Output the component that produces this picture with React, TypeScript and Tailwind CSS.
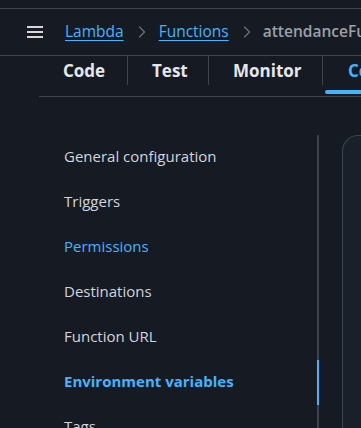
import { ChevronRight } from "lucide-react";

const navItems = [
  { label: "General configuration" },
  { label: "Triggers" },
  { label: "Permissions", link: true },
  { label: "Destinations" },
  { label: "Function URL" },
  { label: "Environment variables", active: true },
  { label: "Tags" },
];

const tabs = [
  { label: "Code", w: "w-[89px]" },
  { label: "Test", w: "w-[81px]" },
  { label: "Monitor", w: "w-[114px]" },
];

export default function App() {
  return (
    <div
      className="w-[361px] h-[428px] overflow-hidden bg-[#161b23] text-[#d1d5db]"
      style={{ fontFamily: '"Open Sans", "Noto Sans", sans-serif' }}
    >
      <div className="h-[9px] border-b border-[#3f444c]" />

      {/* breadcrumb bar */}
      <div className="h-[47px] flex items-center border-b border-[#3f444c] whitespace-nowrap overflow-hidden">
        <div className="shrink-0 ml-[27px] w-[16px] flex flex-col gap-[3px]">
          <span className="h-[2px] bg-[#d6d6d6]" />
          <span className="h-[2px] bg-[#d6d6d6]" />
          <span className="h-[2px] bg-[#d6d6d6]" />
        </div>
        <a className="shrink-0 ml-[22px] text-[15.5px] text-[#42b4ff] underline underline-offset-[3px] decoration-[1px]">
          Lambda
        </a>
        <ChevronRight className="shrink-0 ml-[8px] text-[#6b7079]" size={20} strokeWidth={1.5} />
        <a className="shrink-0 ml-[7px] text-[15.5px] text-[#42b4ff] underline underline-offset-[3px] decoration-[1px]">
          Functions
        </a>
        <ChevronRight className="shrink-0 ml-[8px] text-[#6b7079]" size={20} strokeWidth={1.5} />
        <span className="shrink-0 ml-[6px] text-[15.5px] font-semibold text-[#9ba0a8]">attendanceFunction</span>
      </div>

      {/* tabs */}
      <div className="ml-[39px] h-[41px] border-b border-[#3f444c] flex whitespace-nowrap">
        {tabs.map((t) => (
          <div key={t.label} className={"shrink-0 flex items-start justify-between " + t.w}>
            <div className="pl-[24px] pt-[2px] text-[17px] font-bold text-[#e5e7eb]">{t.label}</div>
            <div className="w-px h-[29px] bg-[#3f444c]" />
          </div>
        ))}
        <div className="relative shrink-0 w-[200px] pt-[2px] pl-[25px] text-[17px] font-bold text-[#42b4ff]">
          Configuration
          <div className="absolute left-[2px] right-0 top-[34px] h-[4px] rounded-full bg-[#42b4ff]" />
        </div>
      </div>

      {/* body */}
      <div className="flex mt-[38px]">
        <div className="w-[319px] shrink-0 flex">
          <ul className="flex-1 pl-[64px] pt-[9px] flex flex-col gap-[21px]">
            {navItems.map((n) => (
              <li
                key={n.label}
                className={
                  "text-[15px] leading-[24px] whitespace-nowrap " +
                  (n.active
                    ? "font-bold text-[#42b4ff]"
                    : n.link
                    ? "text-[#42b4ff]"
                    : "text-[#d1d5db]")
                }
              >
                {n.label}
              </li>
            ))}
          </ul>
          <div className="w-[2px] bg-[#3f444c] flex flex-col">
            <div className="h-[225px]" />
            <div className="h-[45px] bg-[#42b4ff]" />
          </div>
        </div>
        <div className="ml-[23px] flex-1 h-[300px] border-l border-t border-[#3f444c] rounded-tl-[16px] bg-[#1a2029]" />
      </div>
    </div>
  );
}
